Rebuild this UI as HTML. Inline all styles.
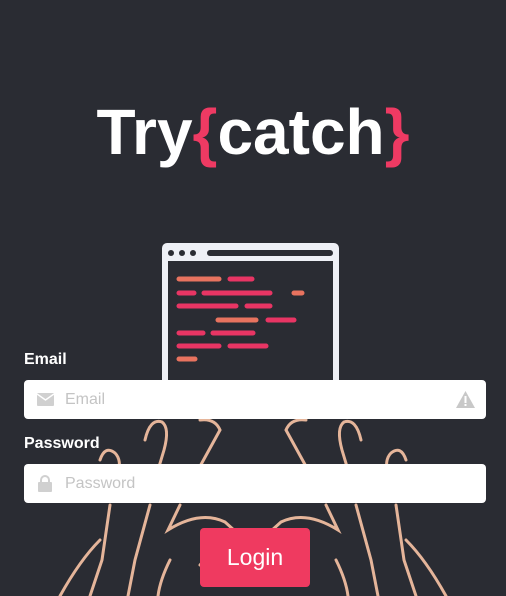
<!DOCTYPE html>
<html><head><meta charset="utf-8"><style>
html,body{margin:0;padding:0}
body{width:506px;height:596px;background:#2a2c33;position:relative;overflow:hidden;font-family:"Liberation Sans",sans-serif}
.logo{position:absolute;left:0;width:506px;top:95px;text-align:center;font-weight:bold;font-size:64px;color:#fff;letter-spacing:0px}
.logo span{color:#ee3a63}
.lbl{position:absolute;left:24px;color:#fff;font-weight:bold;font-size:16px}
.inp{position:absolute;left:24px;width:462px;height:39px;background:#fff;border-radius:4px;color:#c4c4c4;font-size:16px;line-height:39px}
.inp .t{position:absolute;left:41px}
.btn{position:absolute;left:200px;top:528px;width:110px;height:59px;background:#ef3a60;border-radius:4px;color:#fff;font-size:23px;text-align:center;line-height:59px}
</style></head><body>
<svg width="506" height="596" style="position:absolute;left:0;top:0">
<defs>
<g id="h" fill="none" stroke="#e5b59a" stroke-width="3" stroke-linecap="round">
<path d="M100 460 Q105 445 115 453 Q122 460 118 475"/>
<path d="M110 505 L102 560 L90 596"/>
<path d="M145 440 Q150 418 162 422 Q170 428 164 450 L158 470"/>
<path d="M150 505 L135 560 L128 596"/>
<path d="M200 420 Q215 418 220 430 L198 470"/>
<path d="M180 505 L168 530 Q200 510 225 522 L245 540"/>
<path d="M170 560 Q160 580 158 596"/>
<path d="M200 565 Q215 545 240 550"/>
<path d="M60 596 Q80 560 100 540"/>
</g>
</defs>
<use href="#h"/>
<use href="#h" transform="translate(506,0) scale(-1,1)"/>
<rect x="162" y="243" width="177" height="145" rx="5" fill="#eef0f6"/>
<rect x="168" y="261" width="165" height="127" fill="#2a2c33"/>
<circle cx="171" cy="253" r="3" fill="#2a2c33"/><circle cx="182" cy="253" r="3" fill="#2a2c33"/><circle cx="193" cy="253" r="3" fill="#2a2c33"/>
<rect x="207" y="250" width="126" height="6" rx="3" fill="#2a2c33"/>
<g stroke-width="5" stroke-linecap="round">
<path d="M179 279H219M302 293H294M218 320H256M179 359H195" stroke="#e8735f"/>
<path d="M230 279H252M179 293H194M204 293H270M179 306H236M247 306H270M268 320H294M179 333H203M213 333H253M179 346H219M230 346H266" stroke="#e83564"/>
</g>
</svg>
<div class="logo">Try<span>{</span>catch<span>}</span></div>
<div class="lbl" style="top:351px">Email</div>
<div class="inp" style="top:380px">
<svg style="position:absolute;left:13px;top:13px" width="17" height="13"><rect width="17" height="13" rx="1" fill="#d0d0d0"/><path d="M0 1L8.5 7L17 1" stroke="#fff" stroke-width="1.5" fill="none"/></svg>
<span class="t">Email</span>
<svg style="position:absolute;right:11px;top:11px" width="19" height="17"><path d="M9.5 0L19 17H0Z" fill="#c8c8c8"/><rect x="8.5" y="5" width="2" height="7" fill="#fff"/><rect x="8.5" y="13" width="2" height="2" fill="#fff"/></svg>
</div>
<div class="lbl" style="top:435px">Password</div>
<div class="inp" style="top:464px">
<svg style="position:absolute;left:14px;top:11px" width="14" height="17"><path d="M3 8V5a4 4 0 0 1 8 0v3" stroke="#d0d0d0" stroke-width="2" fill="none"/><rect y="7" width="14" height="10" rx="1" fill="#d0d0d0"/></svg>
<span class="t">Password</span>
</div>
<div class="btn">Login</div>
</body></html>
